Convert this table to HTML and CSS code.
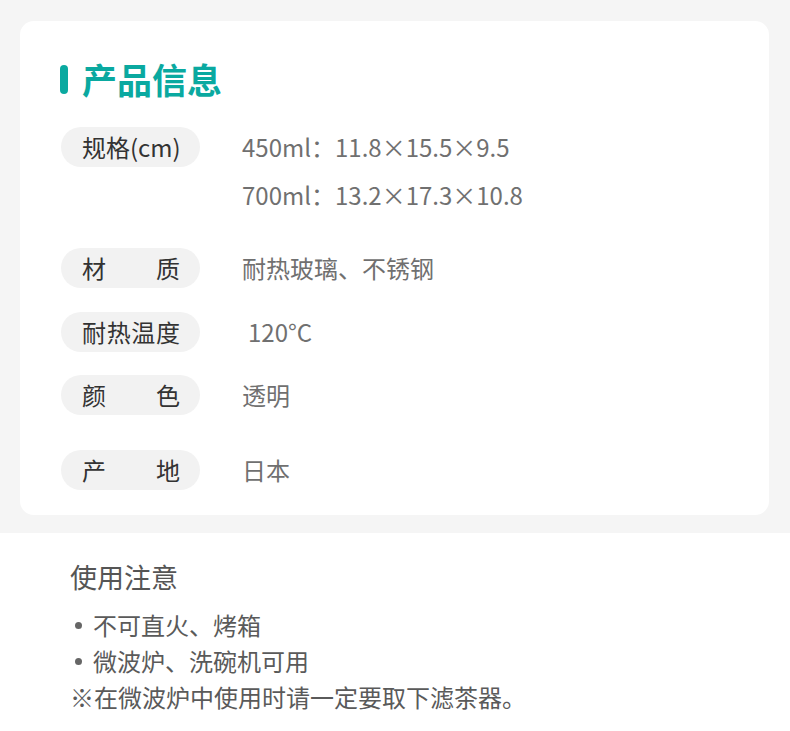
FILE: index.html
```html
<!DOCTYPE html>
<html lang="zh-CN">
<head>
<meta charset="utf-8">
<title>产品信息</title>
<link rel="stylesheet" href="styles.css">
</head>
<body>
<section class="info-wrap">
  <div class="card">
    <h2 class="card-title"><span class="title-bar"></span>产品信息</h2>
    <div class="row row-size">
      <div class="pill"><span>规格(cm)</span></div>
      <div class="values">
        <div class="val">450ml：11.8×15.5×9.5</div>
        <div class="val">700ml：13.2×17.3×10.8</div>
      </div>
    </div>
    <div class="row row-mat">
      <div class="pill spread"><span>材</span><span>质</span></div>
      <div class="values"><div class="val">耐热玻璃、不锈钢</div></div>
    </div>
    <div class="row row-temp">
      <div class="pill spread"><span>耐</span><span>热</span><span>温</span><span>度</span></div>
      <div class="values"><div class="val indent">120°C</div></div>
    </div>
    <div class="row row-color">
      <div class="pill spread"><span>颜</span><span>色</span></div>
      <div class="values"><div class="val">透明</div></div>
    </div>
    <div class="row row-origin">
      <div class="pill spread"><span>产</span><span>地</span></div>
      <div class="values"><div class="val">日本</div></div>
    </div>
  </div>
</section>
<section class="notes">
  <h3 class="notes-title">使用注意</h3>
  <ul class="notes-list">
    <li><span class="dot"></span>不可直火、烤箱</li>
    <li><span class="dot"></span>微波炉、洗碗机可用</li>
  </ul>
  <p class="notes-warn">※在微波炉中使用时请一定要取下滤茶器。</p>
</section>
</body>
</html>
```
FILE: styles.css
```css
* { box-sizing: border-box; }
html, body { margin: 0; padding: 0; }
body {
  background: #ffffff;
  font-family: "Noto Sans CJK SC", "Noto Sans", sans-serif;
  width: 790px;
}
.info-wrap {
  background: #f5f5f5;
  padding: 21px 21px 18px 20px;
}
.card {
  background: #ffffff;
  border-radius: 14px;
  padding: 38px 20px 25px 41px;
}
.card-title {
  margin: 0 0 28px -1px;
  display: flex;
  align-items: center;
  gap: 14px;
  font-size: 35px;
  line-height: 40px;
  font-weight: 700;
  color: #0aa9a0;
}
.title-bar {
  display: block;
  width: 8px;
  height: 29px;
  border-radius: 4px;
  background: #0aa9a0;
}
.row {
  display: flex;
  align-items: flex-start;
  gap: 42px;
}
.row-mat { margin-top: 33px; }
.row-temp { margin-top: 24px; }
.row-color { margin-top: 23px; }
.row-origin { margin-top: 35px; }
.pill {
  flex: none;
  width: 139px;
  height: 40px;
  border-radius: 20px;
  background: #f2f2f2;
  padding: 0 19px 0 21px;
  display: flex;
  align-items: center;
  font-size: 24px;
  color: #333333;
  line-height: 40px;
  white-space: nowrap;
}
.pill.spread { justify-content: space-between; padding-right: 20px; }
.values {
  display: flex;
  flex-direction: column;
  gap: 8px;
}
.val {
  font-size: 24px;
  line-height: 40px;
  color: #707070;
  white-space: nowrap;
}
.val.indent { padding-left: 6px; }
.notes {
  padding: 26px 20px 20px 70px;
  color: #5a5a5a;
}
.notes-title {
  margin: 0 0 12px;
  font-size: 27px;
  line-height: 36px;
  font-weight: 400;
  color: #555555;
}
.notes-list {
  list-style: none;
  margin: 0;
  padding: 0;
}
.notes-list li {
  display: flex;
  align-items: center;
  font-size: 24px;
  line-height: 36px;
  padding-left: 5px;
}
.dot {
  display: inline-block;
  width: 7px;
  height: 7px;
  border-radius: 50%;
  background: #666666;
  margin-right: 11px;
}
.notes-warn {
  margin: 0;
  font-size: 24px;
  line-height: 36px;
}
```
